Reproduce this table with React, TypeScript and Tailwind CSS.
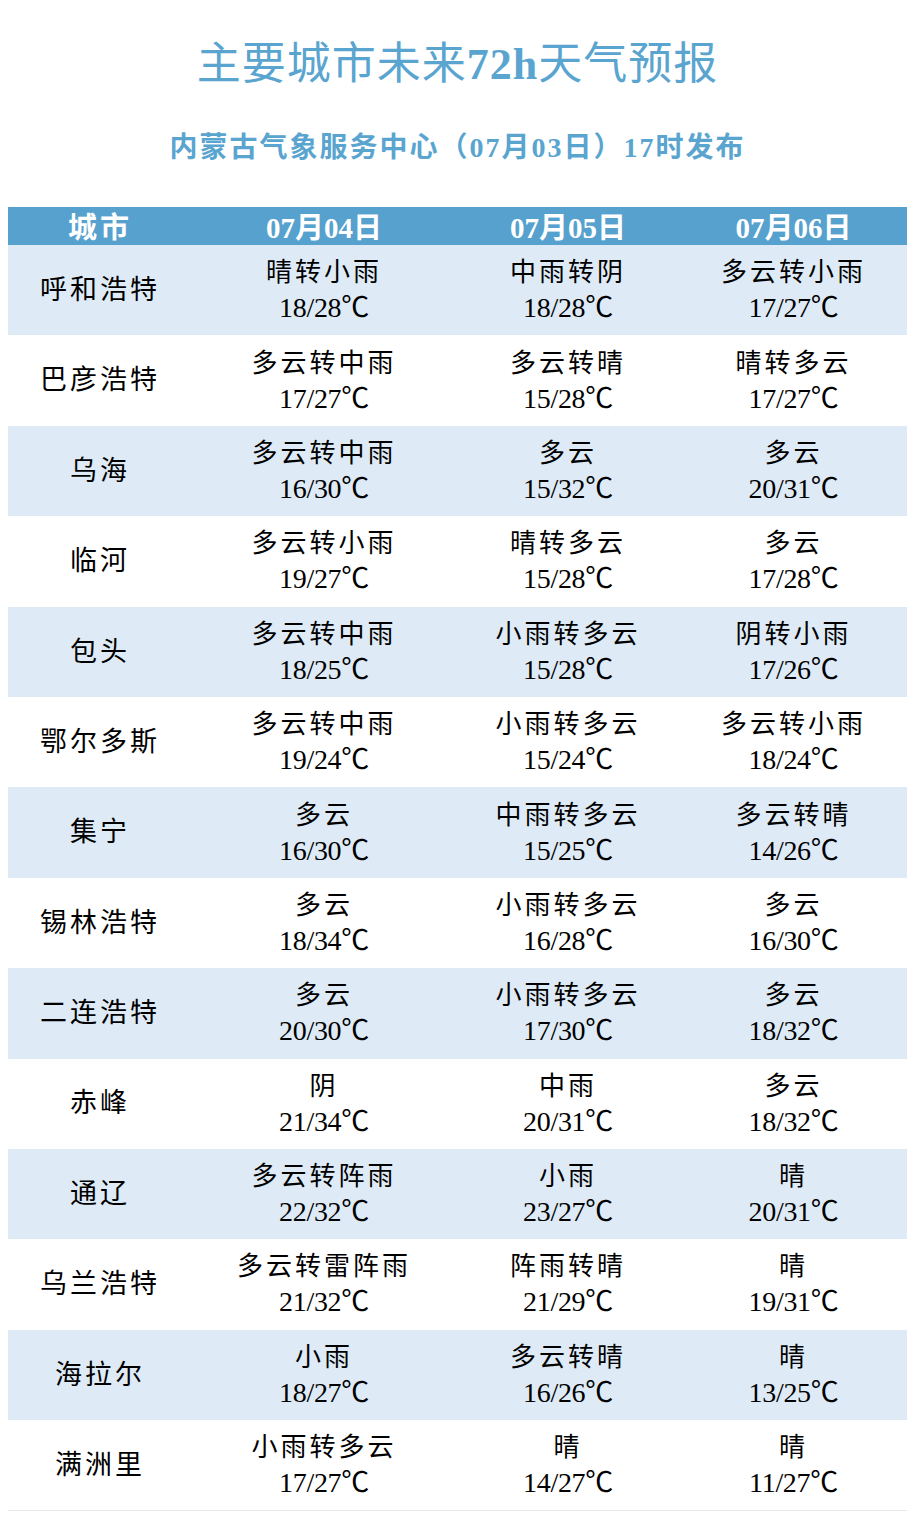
const rows: [string, string, string, string, string, string, string][] = [
  ["呼和浩特", "晴转小雨", "18/28℃", "中雨转阴", "18/28℃", "多云转小雨", "17/27℃"],
  ["巴彦浩特", "多云转中雨", "17/27℃", "多云转晴", "15/28℃", "晴转多云", "17/27℃"],
  ["乌海", "多云转中雨", "16/30℃", "多云", "15/32℃", "多云", "20/31℃"],
  ["临河", "多云转小雨", "19/27℃", "晴转多云", "15/28℃", "多云", "17/28℃"],
  ["包头", "多云转中雨", "18/25℃", "小雨转多云", "15/28℃", "阴转小雨", "17/26℃"],
  ["鄂尔多斯", "多云转中雨", "19/24℃", "小雨转多云", "15/24℃", "多云转小雨", "18/24℃"],
  ["集宁", "多云", "16/30℃", "中雨转多云", "15/25℃", "多云转晴", "14/26℃"],
  ["锡林浩特", "多云", "18/34℃", "小雨转多云", "16/28℃", "多云", "16/30℃"],
  ["二连浩特", "多云", "20/30℃", "小雨转多云", "17/30℃", "多云", "18/32℃"],
  ["赤峰", "阴", "21/34℃", "中雨", "20/31℃", "多云", "18/32℃"],
  ["通辽", "多云转阵雨", "22/32℃", "小雨", "23/27℃", "晴", "20/31℃"],
  ["乌兰浩特", "多云转雷阵雨", "21/32℃", "阵雨转晴", "21/29℃", "晴", "19/31℃"],
  ["海拉尔", "小雨", "18/27℃", "多云转晴", "16/26℃", "晴", "13/25℃"],
  ["满洲里", "小雨转多云", "17/27℃", "晴", "14/27℃", "晴", "11/27℃"],
];

const font = "font-['Liberation_Serif','Noto_Sans_CJK_SC',serif]";

function Cell({ weather, temp }: { weather: string; temp: string }) {
  return (
    <div className="flex flex-col items-center justify-center leading-[35px]">
      <span className="tracking-[3px] text-[26px]">{weather}</span>
      <span className="text-[28px] tracking-[-0.3px]">{temp}</span>
    </div>
  );
}

export default function App() {
  return (
    <main className={`w-[915px] h-[1520px] bg-white ${font}`}>
      <h1 className="pt-[38px] text-center text-[44px] leading-[54px] text-[#5aa5d0] tracking-[1px]">
        主要城市未来<b>72h</b>天气预报
      </h1>
      <p className="mt-[41px] text-center text-[28px] leading-[30px] font-bold text-[#5aa5d0] tracking-[2px]">
        内蒙古气象服务中心（07月03日）17时发布
      </p>
      <section className="mx-[8px] mt-[44px] border-b border-[#e6e6e6]">
        <div className="grid grid-cols-[184px_264px_224px_227px] h-[38px] items-center bg-[#56a1cd] text-white font-bold text-[29px] text-center">
          <span className="tracking-[3px]">城市</span>
          <span>07月04日</span>
          <span>07月05日</span>
          <span>07月06日</span>
        </div>
        {rows.map((r, i) => (
          <div
            key={r[0]}
            className={`grid grid-cols-[184px_264px_224px_227px] h-[90.4px] items-center text-black ${
              i % 2 === 0 ? "bg-[#deebf7]" : "bg-white"
            }`}
          >
            <span className="text-center text-[27px] tracking-[3px]">{r[0]}</span>
            <Cell weather={r[1]} temp={r[2]} />
            <Cell weather={r[3]} temp={r[4]} />
            <Cell weather={r[5]} temp={r[6]} />
          </div>
        ))}
      </section>
    </main>
  );
}
